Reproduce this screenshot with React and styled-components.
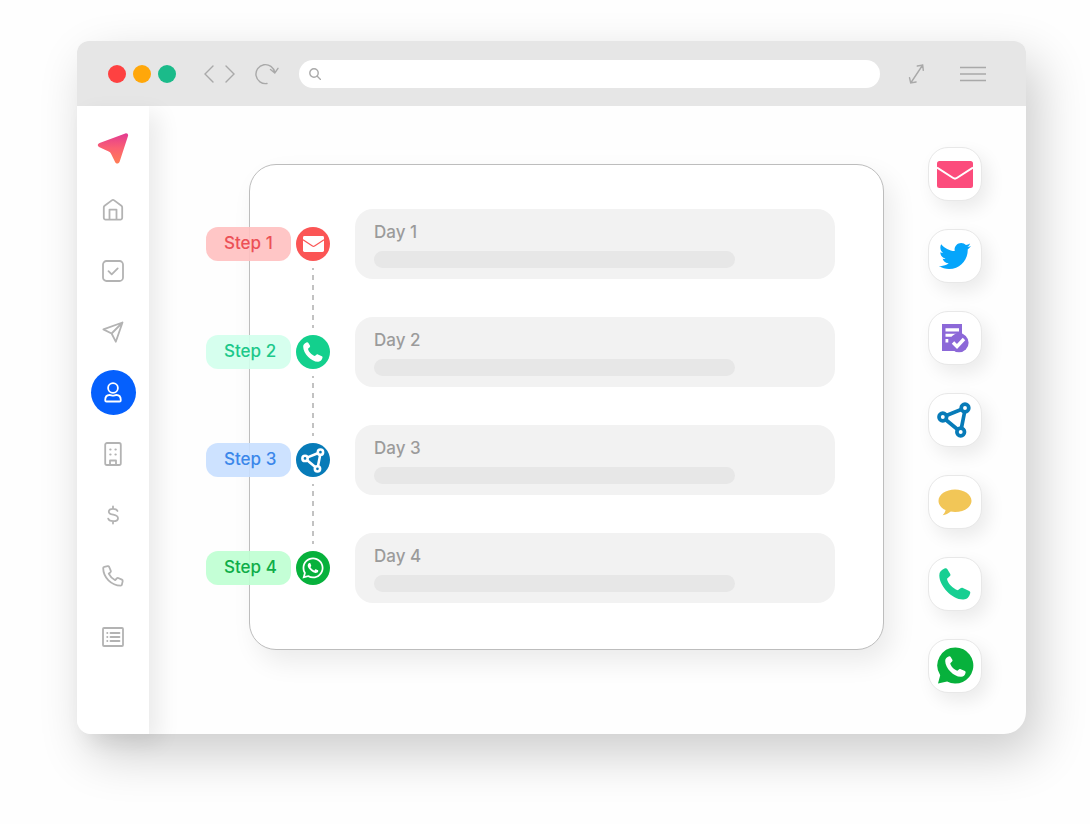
import React, { useState } from "react"
import styled, { createGlobalStyle } from "styled-components"
import { FaTwitter, FaWhatsapp } from "react-icons/fa"

const GlobalStyle = createGlobalStyle`
  * {
    box-sizing: border-box;
  }
  body {
    margin: 0;
    background: #fefefe;
    font-family: Inter, "Liberation Sans", sans-serif;
  }
  button {
    padding: 0;
    border: 0;
    background: none;
    cursor: pointer;
  }
  svg {
    display: block;
    flex-shrink: 0;
  }
`

const HomeIcon = () => (
  <svg width="22" height="22" viewBox="0 0 22 22">
    <path d="M1.8 8.4a2 2 0 0 1 .8-1.6L9.8 1.4a2 2 0 0 1 2.4 0l7.2 5.4a2 2 0 0 1 .8 1.6v10.4a1.8 1.8 0 0 1-1.8 1.8H3.6a1.8 1.8 0 0 1-1.8-1.8zM7.5 20.6v-10h7v10" />
  </svg>
)

const CheckIcon = () => (
  <svg width="22" height="22" viewBox="0 0 22 22">
    <rect x="1" y="1" width="20" height="20" rx="3.5" />
    <path d="M6.5 11.2l3.2 3.2 6-6" />
  </svg>
)

const SendIcon = () => (
  <svg width="22" height="22" viewBox="0 0 22 22">
    <path d="M20.5 1.5L1.4 8.4l8.2 4.1 4.2 8.2zM20.5 1.5L9.6 12.5" />
  </svg>
)

const UserIcon = () => (
  <svg width="18" height="21" viewBox="0 0 18 21">
    <circle cx="9" cy="6" r="4.9" />
    <path d="M1.2 18.2c0-3.6 1.800-5.200 4.400-5.200 1.300 0 2.100.6 3.400.6s2.100-.6 3.400-.6c2.600 0 4.400 1.600 4.400 5.200a1.300 1.300 0 0 1-1.300 1.300h-13a1.300 1.300 0 0 1-1.300-1.300z" />
  </svg>
)

const BuildingIcon = () => (
  <svg width="18" height="24" viewBox="0 0 18 24">
    <rect x="1.2" y="1" width="15.6" height="22" rx="1.8" />
    <path d="M6 23v-4.500h6V23" />
    <path strokeWidth="2.200" d="M6.300 7.500h.2M11.500 7.500h.2M6.300 12.500h.2M11.500 12.500h.2" />
  </svg>
)

const DollarIcon = () => (
  <svg width="14" height="20" viewBox="0 0 14 20">
    <path d="M7 1.500v2M7 16.500v2M11.500 6C11 4.300 9.500 3.800 7 3.800c-2.600 0-4.200.9-4.200 2.900C2.800 11 12 8.400 12 13.200c0 2-1.900 3-4.800 3-2.800 0-4.500-.8-5-2.600" />
  </svg>
)

const PhoneIcon = () => (
  <svg width="22" height="22" viewBox="0 0 22 22">
    <path d="M2.200 1.900l3.500-.7c.7-.1 1.200.2 1.500.8l1.600 3.800c.2.500.1 1-.3 1.400L6.700 8.700c1.300 2.700 3.700 5.100 6.500 6.500l1.600-1.900c.4-.4.900-.5 1.400-.3l3.700 1.600c.6.3.9.800.8 1.500l-.8 3.500c-.1.600-.6 1-1.200 1C9.400 20.600 1.200 12.500 1.200 3.100c0-.6.4-1.100 1-1.200z" />
  </svg>
)

const ListIcon = () => (
  <svg width="22" height="20" viewBox="0 0 22 20">
    <rect x="1" y="1" width="20" height="18" rx="1" />
    <path d="M5.200 6h.2M5.200 10h.2M5.200 14h.2M8.500 6h9M8.500 10h9M8.500 14h9" />
  </svg>
)

const LogoMark = () => (
  <svg width="32" height="32" viewBox="0 0 32 32">
    <defs>
      <linearGradient id="logo" x1="0" y1="0" x2="0" y2="1">
        <stop offset="0" stopColor="#e23a92" />
        <stop offset=".5" stopColor="#fb6072" />
        <stop offset="1" stopColor="#ff7d55" />
      </linearGradient>
    </defs>
    <path
      fill="url(#logo)"
      d="M28.300.4c1.900-.5 3.200.7 2.700 2.600l-8.400 25.700c-.8 2.300-3.500 2.400-4.500.3l-4.200-8.400c-.5-1-1.200-1.600-2.200-2L2.500 14.300C.2 13.300.3 10.700 2.600 9.900z"
    />
  </svg>
)

const MailIcon = ({ width, height, line }) => (
  <svg width={width} height={height} viewBox="0 0 36 27" preserveAspectRatio="none">
    <rect width="36" height="27" rx="2.5" fill="currentColor" />
    <path d="M0 6.500l16.200 10.500a3.200 3.200 0 0 0 3.600 0L36 6.500" fill="none" stroke={line} strokeWidth="2" />
  </svg>
)

const handset =
  "M5.500.6c1.200-.5 2.200-.4 2.900.6l2.700 4.500c.6 1 .4 1.800-.4 2.600L8 10.800c.6 4.500 5.800 9.800 10.800 11.400l2.700-2c.8-.6 1.500-.7 2.400-.2l6.300 2.900c1 .5 1.300 1.300 1 2.400-1 3.700-3 6-6.700 6.200C13.500 32 .5 18.500.3 7.500.2 4 2.300 1.900 5.500.6z"

const CallIcon = ({ size }) => (
  <svg width={size} height={size} viewBox="0 0 32 32">
    <path d={handset} fill="currentColor" />
  </svg>
)

const TaskIcon = () => (
  <svg width="28" height="29" viewBox="0 0 28 29">
    <path
      fill="currentColor"
      fillRule="evenodd"
      d="M1 0h20v27H1zM4.500 4.200v3.300h13.500V4.200zM4.500 9.700v3h8l3-3zM4.500 15v3.500h2.800V15z"
    />
    <circle cx="18" cy="18.7" r="9.6" fill="currentColor" />
    <path d="M12 18.500l4 4 7-7.500" fill="none" stroke="#fff" strokeWidth="3.400" />
  </svg>
)

const NodesIcon = ({ size }) => (
  <svg width={size} height={size} viewBox="0 0 36 36" fill="none" stroke="currentColor" strokeWidth="3.700">
    <path d="M9.400 13.500l14.800-6M8.800 17.800l11.800 9.700M27.600 10l-3.200 16.200" />
    <circle cx="5.8" cy="15" r="3.8" />
    <circle cx="28" cy="6" r="3.800" />
    <circle cx="23.700" cy="30" r="3.800" />
  </svg>
)

const ChatIcon = () => (
  <svg width="34" height="27" viewBox="0 0 34 27">
    <path
      fill="currentColor"
      d="M17 .5c9.200 0 16.500 5 16.500 11.300S26.200 23 17 23c-1.500 0-2.900-.1-4.200-.4-2.400 2-5.200 3.200-8.200 3.700 1.600-1.600 2.700-3.400 3-5.200C3.200 19.100.5 15.700.5 11.800.5 5.500 7.800.5 17 .5z"
    />
  </svg>
)

const WhatsappSolid = () => (
  <svg width="38" height="38" viewBox="0 0 38 38">
    <path
      fill="currentColor"
      d="M19.500.5a18 18 0 1 1-8.400 34L2 36.500l2.200-8.300A18 18 0 0 1 19.500.5z"
    />
    <path d={handset} fill="#fff" transform="translate(9 9) scale(.66)" />
  </svg>
)

const menuItems = [
  { title: "Home", icon: HomeIcon },
  { title: "Tasks", icon: CheckIcon },
  { title: "Campaigns", icon: SendIcon },
  { title: "Contacts", icon: UserIcon },
  { title: "Companies", icon: BuildingIcon },
  { title: "Deals", icon: DollarIcon },
  { title: "Calls", icon: PhoneIcon },
  { title: "Lists", icon: ListIcon },
]

const steps = [
  {
    step: "Step 1",
    day: "Day 1",
    color: "#ec5056",
    tint: "rgba(255, 192, 192, 0.9)",
    badge: "#fb5555",
    icon: <MailIcon width={21} height={16} line="#fb5555" />,
  },
  {
    step: "Step 2",
    day: "Day 2",
    color: "#1cc88a",
    tint: "rgba(210, 255, 236, 0.9)",
    badge: "#13d08d",
    icon: <CallIcon size={20} />,
  },
  {
    step: "Step 3",
    day: "Day 3",
    color: "#3b87ea",
    tint: "rgba(200, 223, 255, 0.9)",
    badge: "#077bb8",
    icon: <NodesIcon size={25} />,
  },
  {
    step: "Step 4",
    day: "Day 4",
    color: "#0ead48",
    tint: "rgba(190, 255, 209, 0.9)",
    badge: "#07b13c",
    icon: <FaWhatsapp size={24} />,
  },
]

const channels = [
  { title: "Email", color: "#fc4c7c", icon: <MailIcon width={36} height={27} line="#fff" /> },
  { title: "Twitter", color: "#05a5fb", icon: <FaTwitter size={32} /> },
  { title: "Task", color: "#8c68d8", icon: <TaskIcon /> },
  { title: "Network", color: "#077bb8", icon: <NodesIcon size={36} /> },
  { title: "Message", color: "#f2c657", icon: <ChatIcon /> },
  { title: "Call", color: "#17cf92", icon: <CallIcon size={32} /> },
  { title: "WhatsApp", color: "#07b13c", icon: <WhatsappSolid /> },
]

const BrowserBar = () => (
  <Bar>
    <Lights>
      <Light color="#fe4141" />
      <Light color="#ffa70a" />
      <Light color="#1bbb8a" />
    </Lights>
    <History>
      <BarButton aria-label="Back">
        <svg width="10" height="18" viewBox="0 0 10 18">
          <path d="M9 1L1 9l8 8" />
        </svg>
      </BarButton>
      <BarButton aria-label="Forward">
        <svg width="10" height="18" viewBox="0 0 10 18">
          <path d="M1 1l8 8-8 8" />
        </svg>
      </BarButton>
    </History>
    <BarButton aria-label="Reload">
      <svg width="24" height="22" viewBox="0 0 24 22">
        <path d="M12 20.500A9.500 9.500 0 1 1 19.800 9.500M15.500 6.500l4.300 3.500L23 5.300" />
      </svg>
    </BarButton>
    <Address>
      <svg width="12" height="12" viewBox="0 0 12 12">
        <circle cx="5" cy="5" r="4.2" />
        <path d="M8 8l3.500 3.500" />
      </svg>
      <input type="text" aria-label="Address" />
    </Address>
    <BarActions>
      <BarButton aria-label="Full screen">
        <svg width="17" height="22" viewBox="0 0 17 22">
          <path d="M2.700 20L14.700 2M9.300 3l5.400-1 .6 5.400M1.500 14.600l1.200 5.400 5.400-1" />
        </svg>
      </BarButton>
      <BarButton aria-label="Menu">
        <svg width="26" height="16" viewBox="0 0 26 16">
          <path d="M0 1.500h26M0 8h26M0 14.500h26" />
        </svg>
      </BarButton>
    </BarActions>
  </Bar>
)

const App = () => {
  const [active, setActive] = useState("Contacts")

  return (
    <Page>
      <GlobalStyle />
      <Window>
        <BrowserBar />
        <Body>
          <Sidebar>
            <LogoLink href="#" aria-label="Dashboard">
              <LogoMark />
            </LogoLink>
            {menuItems.map(({ title, icon: Icon }) => (
              <MenuButton
                key={title}
                aria-label={title}
                $active={title === active}
                onClick={() => setActive(title)}
              >
                <Icon />
              </MenuButton>
            ))}
          </Sidebar>
          <Content>
            <Sequence>
              <StepList>
                {steps.map((item, index) => (
                  <li key={item.step}>
                    <StepRow>
                      <Tag color={item.color} $tint={item.tint}>
                        {item.step}
                      </Tag>
                      <Badge color={item.badge}>{item.icon}</Badge>
                      <Day>
                        <DayTitle>{item.day}</DayTitle>
                        <Placeholder />
                      </Day>
                    </StepRow>
                    {index < steps.length - 1 && <Connector />}
                  </li>
                ))}
              </StepList>
            </Sequence>
            <Channels>
              {channels.map((item) => (
                <Channel key={item.title} aria-label={item.title} color={item.color}>
                  {item.icon}
                </Channel>
              ))}
            </Channels>
          </Content>
        </Body>
      </Window>
    </Page>
  )
}

const Page = styled.div`
  padding: 41px 64px 90px 77px;
`

const Window = styled.div`
  border-radius: 12px 12px 22px 14px;
  background: #fefefe;
  box-shadow: 12px 20px 50px rgba(0, 0, 0, 0.2);
`

const Bar = styled.header`
  display: flex;
  align-items: center;
  height: 65px;
  padding: 0 40px 0 31px;
  border-radius: 12px 12px 0 0;
  background: #e6e6e6;
  svg {
    fill: none;
    stroke: #a9a9a9;
    stroke-width: 1.4;
    stroke-linecap: round;
  }
`

const Lights = styled.div`
  display: flex;
  gap: 7px;
`

const Light = styled.span`
  width: 18px;
  height: 18px;
  border-radius: 50%;
  background: ${({ color }) => color};
`

const History = styled.div`
  display: flex;
  gap: 11px;
  margin: 0 20px 0 28px;
`

const BarButton = styled.button`
  display: flex;
`

const Address = styled.label`
  flex: 1;
  display: flex;
  align-items: center;
  gap: 8px;
  height: 28px;
  margin: 0 28px 0 20px;
  padding: 0 10px;
  border-radius: 14px;
  background: #fff;
  input {
    flex: 1;
    min-width: 0;
    border: 0;
    outline: 0;
    background: none;
    font: inherit;
    font-size: 14px;
    color: #777;
  }
`

const BarActions = styled.div`
  display: flex;
  align-items: center;
  gap: 35px;
`

const Body = styled.div`
  display: flex;
`

const Sidebar = styled.nav`
  display: flex;
  flex-direction: column;
  align-items: center;
  gap: 16px;
  width: 72px;
  padding: 20px 0;
  border-radius: 0 0 0 14px;
  background: #fff;
  box-shadow: 10px 8px 22px rgba(0, 0, 0, 0.08);
`

const LogoLink = styled.a`
  display: flex;
  align-items: center;
  justify-content: center;
  width: 45px;
  height: 45px;
`

const MenuButton = styled.button`
  display: flex;
  align-items: center;
  justify-content: center;
  width: 45px;
  height: 45px;
  border-radius: 50%;
  background: ${({ $active }) => ($active ? "#0560fd" : "none")};
  svg {
    fill: none;
    stroke: ${({ $active }) => ($active ? "#fff" : "#b3b3b3")};
    stroke-width: 1.8;
    stroke-linecap: round;
    stroke-linejoin: round;
  }
`

const Content = styled.main`
  flex: 1;
  display: flex;
  align-items: flex-start;
  gap: 44px;
  padding: 41px 44px 41px 100px;
`

const Sequence = styled.section`
  flex: 1;
  margin-top: 17px;
  padding: 44px 48px 46px 0;
  border: 1px solid #bdbdbd;
  border-radius: 27px;
  background: #fff;
  box-shadow: 8px 12px 26px rgba(0, 0, 0, 0.08);
`

const StepList = styled.ol`
  margin: 0 0 0 -44px;
  padding: 0;
  list-style: none;
`

const StepRow = styled.div`
  display: flex;
  align-items: center;
`

const Tag = styled.span`
  width: 85px;
  height: 34px;
  padding-left: 18px;
  border-radius: 12px;
  font-size: 17px;
  font-weight: 500;
  line-height: 32px;
  color: ${({ color }) => color};
  background: ${({ $tint }) => $tint};
`

const Badge = styled.span`
  display: flex;
  align-items: center;
  justify-content: center;
  width: 34px;
  height: 34px;
  margin: 0 25px 0 5px;
  border-radius: 50%;
  color: #fff;
  background: ${({ color }) => color};
`

const Day = styled.div`
  flex: 1;
  padding: 11px 100px 11px 19px;
  border-radius: 18px;
  background: #f2f2f2;
`

const DayTitle = styled.h3`
  margin: 0 0 7px;
  font-size: 17px;
  font-weight: 500;
  line-height: 24px;
  color: #9b9b9b;
`

const Placeholder = styled.div`
  height: 17px;
  border-radius: 9px;
  background: #e7e7e7;
`

// dashed line between two badges, tucked into the rows above and below
const Connector = styled.div`
  width: 2px;
  height: 60px;
  margin: -11px 0 -11px 106px;
  background: repeating-linear-gradient(
    #c2c2c2 0 2px,
    transparent 2px 7px,
    #c2c2c2 7px 10px
  );
`

const Channels = styled.div`
  display: flex;
  flex-direction: column;
  gap: 28px;
`

const Channel = styled.button`
  display: flex;
  align-items: center;
  justify-content: center;
  width: 54px;
  height: 54px;
  border: 1px solid #e8e8e8;
  border-radius: 20px;
  color: ${({ color }) => color};
  background: #fff;
  box-shadow: 6px 8px 18px rgba(0, 0, 0, 0.08);
`

export default App
